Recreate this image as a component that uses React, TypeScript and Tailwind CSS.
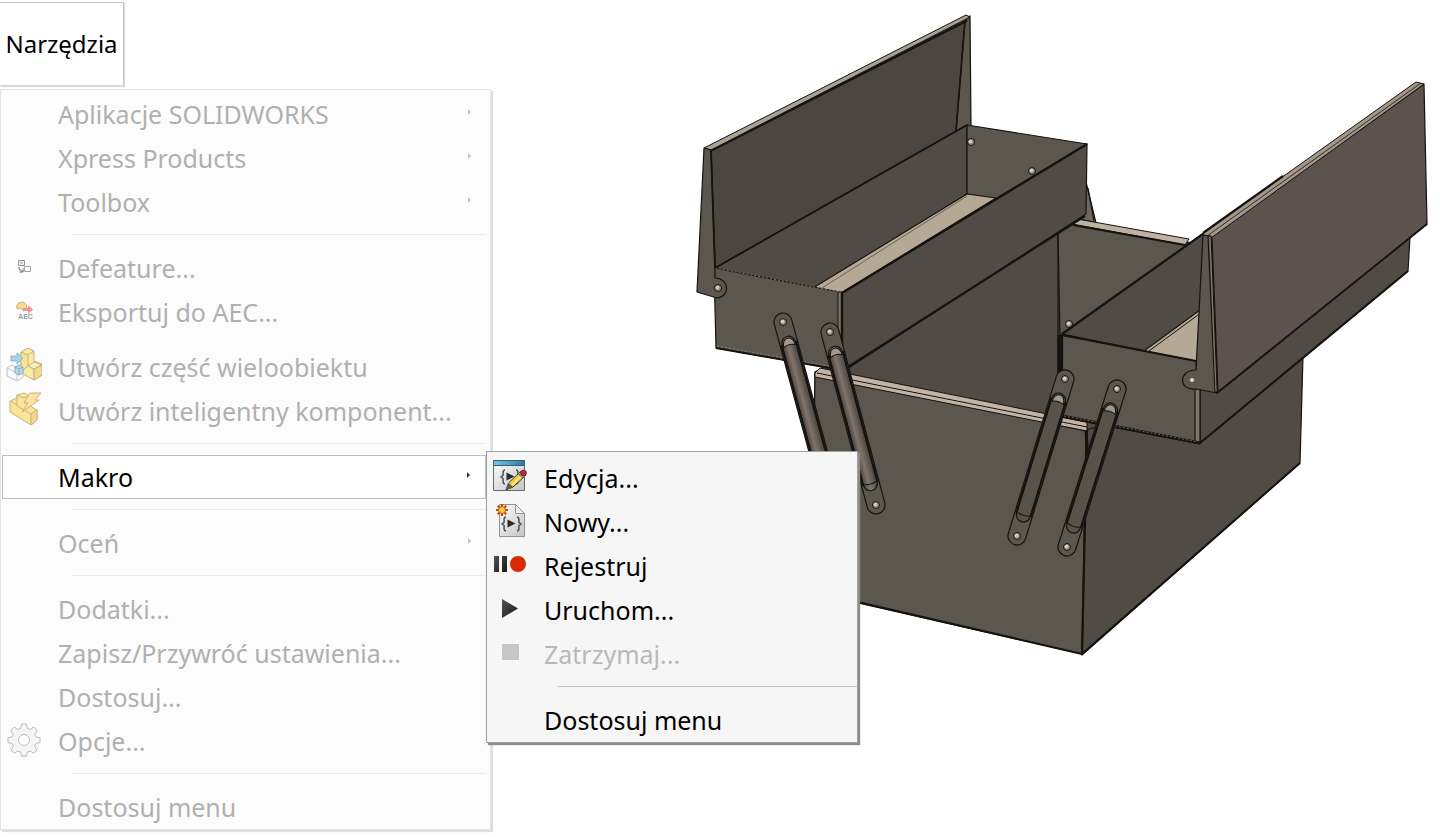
import React, { useState } from "react";
import clsx from "clsx";

const DefeatureIcon = () => (
  <svg viewBox="0 0 36 36" className="h-9 w-9" fill="none" stroke="#8f8f8f">
    <path d="M12.500 12.500h6v5h-6z" />
    <path d="M14 13.500l3 3m0-3l-3 3" strokeWidth="0.800" />
    <path d="M18.500 18.500h6v5h-6z" stroke="#a8a8a8" />
    <path d="M13 19v2l4 3M17 20.500V24h-3.500" stroke="#6d6d6d" />
  </svg>
);

const AecIcon = () => (
  <svg viewBox="0 0 36 36" className="h-9 w-9">
    <path
      d="M10.500 15l2-4 5-1 3 3v4l-3 2-3-3-3 1z"
      fill="#f8dc8c"
      stroke="#c9ab80"
    />
    <path d="M17 16h5v-3l5 4.500-5 4.500v-3h-5z" fill="#ee9499" />
    <text
      x="19.500"
      y="27"
      textAnchor="middle"
      fontSize="7"
      fontWeight="bold"
      fill="#9a9a9a"
      fontFamily="Liberation Sans, sans-serif"
    >
      AEC
    </text>
  </svg>
);

const PartIcon = () => (
  <svg viewBox="0 0 36 36" className="h-9 w-9" strokeLinejoin="round">
    <g stroke="#c3b183">
      <path d="M15 5l7-4 6 3v10l8 3v11l-8 5-13-7z" fill="#faeba4" />
      <path d="M15 5l7 3v11l-7 6z" fill="#f8e491" />
      <path d="M22 8l6-4M22 19l6-4 8 3-8 4zM28 22v11" fill="#fbf0bd" />
      <path d="M28 22l8-4v10l-8 5z" fill="#f1dc8b" />
    </g>
    <path
      d="M1 21l5-3 3 2v5l4 2 4-2v5l-6 4-10-5z"
      fill="#fbfbfb"
      stroke="#b9bec6"
    />
    <path d="M1 21l10 5v8" fill="none" stroke="#c5c9d0" />
    <path d="M9 20l4-2 4 2v6l-4 2-4-2z" fill="#b4dcf0" stroke="#86b0c8" />
    <path d="M9 20l4 2 4-2M13 22v6" fill="none" stroke="#86b0c8" />
    <path d="M5 9h6V6l6 5-6 6v-3H5z" fill="#a9d4ea" stroke="#8bb4ca" />
  </svg>
);

const SmartPartIcon = () => (
  <svg viewBox="0 0 36 36" className="h-9 w-9" strokeLinejoin="round">
    <g stroke="#cbb383">
      <path
        d="M4 10l7-3V4l7-2 6 3v10l7 4v10l-6 5L4 21z"
        fill="#f9e697"
      />
      <path d="M4 10l7 4V4l6 3 7-2M11 14v1l14 8 6-4M25 23v11" fill="none" />
      <path d="M25 23l6-4v10l-6 5z" fill="#f2d98c" />
    </g>
    <path
      d="M24 2h11l-6 7h4L16 21l6-9h-4z"
      fill="#fce3a0"
      stroke="#dba987"
    />
  </svg>
);

const GearIcon = () => (
  <svg
    viewBox="0 0 36 36"
    className="h-9 w-9"
    fill="#f5f5f5"
    stroke="#bcbcbc"
    strokeLinejoin="round"
  >
    <path d="M15.500 3h5l.8 4.300 2.800 1.200L27.700 6l3.500 3.500-2.500 3.700 1.200 2.700 4.100.8v5l-4.100.8-1.200 2.700 2.500 3.700-3.500 3.400-3.600-2.400-2.800 1.200-.8 4h-5l-.8-4-2.800-1.200-3.600 2.400-3.500-3.400 2.500-3.700-1.200-2.700-4.100-.8v-5l4.100-.8 1.200-2.700-2.500-3.700L8.300 6l3.600 2.500 2.800-1.200z" />
    <circle cx="18" cy="19" r="5.500" fill="#fcfcfc" />
  </svg>
);

const Braces = () => (
  <g fill="none" stroke="#4a4a4a" strokeWidth="1.500">
    <path d="M13 12c-3 0-1.500 4-2 5.500L9 19l2 1.500c.5 1.500-1 5.500 2 5.500" />
    <path d="M24 12c3 0 1.500 4 2 5.500l2 1.500-2 1.500c-.5 1.500 1 5.500-2 5.500" />
    <path d="M14.500 14.500v8l8-4z" fill="#2b2b2b" stroke="none" />
  </g>
);

const EditIcon = () => (
  <svg viewBox="0 0 36 36" className="h-9 w-9">
    <defs>
      <linearGradient id="sheet" x1="0" y1="0" x2="1" y2="1">
        <stop offset="0" stopColor="#fdfdfd" />
        <stop offset="1" stopColor="#c4c4c4" />
      </linearGradient>
      <linearGradient id="titlebar">
        <stop offset="0" stopColor="#7cc3dd" />
        <stop offset="1" stopColor="#2f7ba0" />
      </linearGradient>
    </defs>
    <path d="M1.500 2.500h31v30h-31z" fill="url(#sheet)" stroke="#676b6e" />
    <path d="M1.500 2.500h31v5h-31z" fill="url(#titlebar)" stroke="#2e617a" />
    <Braces />
    <path d="M14 32l2.500-7L28 14l5 4-12 11z" fill="#f2cb3c" stroke="#4c4223" />
    <path d="M20 27l10-10" stroke="#fff0a0" strokeWidth="1.500" />
    <path d="M14 32l2.500-7 4.500 4z" fill="#5a5a50" />
    <path
      d="M26 16l3-3 5 4-3 3z"
      fill="#a2a2a2"
      stroke="#555"
      strokeWidth="0.700"
    />
    <circle cx="31.500" cy="15" r="2.800" fill="#b52f3c" stroke="#711e27" />
  </svg>
);

const NewIcon = () => (
  <svg viewBox="0 0 36 36" className="h-9 w-9">
    <path d="M7.500 2.500h16l9 9v23h-25z" fill="url(#sheet)" stroke="#929292" />
    <path d="M23.500 2.500v9h9z" fill="#f4f4f4" stroke="#929292" />
    <g transform="translate(1 3)">
      <Braces />
    </g>
    <path
      d="M10 2v12M4 8h12M5.800 3.800l8.400 8.400M14.200 3.800l-8.400 8.400"
      stroke="#b94c16"
      strokeWidth="2.200"
    />
    <circle cx="10" cy="8" r="3.500" fill="#ffc746" stroke="#cf5b18" />
  </svg>
);

const RecordIcon = () => (
  <svg viewBox="0 0 36 36" className="h-9 w-9">
    <defs>
      <linearGradient id="dark" x1="0" y1="0" x2="1" y2="1">
        <stop offset="0" stopColor="#555" />
        <stop offset="1" stopColor="#151515" />
      </linearGradient>
    </defs>
    <path d="M2 10h5v16H2zM10 10h5v16h-5z" fill="url(#dark)" />
    <circle cx="26" cy="18" r="8" fill="#d92a04" />
  </svg>
);

const RunIcon = () => (
  <svg viewBox="0 0 36 36" className="h-9 w-9">
    <path d="M10 9l16 9.500L10 28z" fill="url(#dark)" />
  </svg>
);

const StopIcon = () => (
  <svg viewBox="0 0 36 36" className="h-9 w-9">
    <path d="M10 10h17v16H10z" fill="#c6c6c6" />
  </svg>
);

const SubmenuArrow = () => (
  <svg
    viewBox="0 0 6 8"
    className="mb-1 h-2 w-1.5 opacity-80"
    fill="currentColor"
  >
    <path d="M2 1l3 3-3 3z" />
  </svg>
);

interface MenuItemProps {
  label: string;
  icon?: React.ReactNode;
  hasSubmenu?: boolean;
  active?: boolean;
  disabled?: boolean;
  onClick?: () => void;
}

function MenuItem({
  label,
  icon,
  hasSubmenu,
  active,
  disabled,
  onClick,
}: MenuItemProps) {
  return (
    <button
      type="button"
      role="menuitem"
      disabled={disabled}
      aria-haspopup={hasSubmenu ? "menu" : undefined}
      onClick={onClick}
      className={clsx(
        "flex h-11 w-full items-center text-left disabled:text-[#b9b9b9]",
        active ? "border border-[#bdbdbd] bg-white pr-3.5 text-black" : "pr-3.5"
      )}
    >
      <span
        className={clsx(
          "flex shrink-0 justify-center pb-1",
          active ? "w-[55px]" : "w-14 pr-3"
        )}
      >
        {icon}
      </span>
      <span className="flex-1 whitespace-nowrap">{label}</span>
      {hasSubmenu && <SubmenuArrow />}
    </button>
  );
}

function Separator() {
  return (
    <li role="separator" className="h-[22px] pl-[70px] pt-2.5">
      <div className="border-t border-current opacity-20" />
    </li>
  );
}

function MacroMenu() {
  return (
    <ul
      role="menu"
      aria-label="Makro"
      className="absolute -top-1 left-full z-10 w-[372px] border border-[#a0a0a0] bg-[#f6f6f6] pl-px pt-1 text-black shadow-[2px_2px_1px_#8c8c8c]"
    >
      <li>
        <MenuItem label="Edycja..." icon={<EditIcon />} />
      </li>
      <li>
        <MenuItem label="Nowy..." icon={<NewIcon />} />
      </li>
      <li>
        <MenuItem label="Rejestruj" icon={<RecordIcon />} />
      </li>
      <li>
        <MenuItem label="Uruchom..." icon={<RunIcon />} />
      </li>
      <li>
        <MenuItem label="Zatrzymaj..." icon={<StopIcon />} disabled />
      </li>
      <Separator />
      <li>
        <MenuItem label="Dostosuj menu" />
      </li>
    </ul>
  );
}

function ToolsMenu() {
  const [macroOpen, setMacroOpen] = useState(true);

  return (
    <ul
      role="menu"
      aria-label="Narzędzia"
      className="border border-[#e3e3e3] bg-[#fcfcfc] pl-px pr-1 pt-0.5 text-[#b0b0b0] shadow-[2px_2px_1px_#dedede]"
    >
      <li>
        <MenuItem label="Aplikacje SOLIDWORKS" hasSubmenu />
      </li>
      <li>
        <MenuItem label="Xpress Products" hasSubmenu />
      </li>
      <li>
        <MenuItem label="Toolbox" hasSubmenu />
      </li>
      <Separator />
      <li>
        <MenuItem label="Defeature..." icon={<DefeatureIcon />} />
      </li>
      <li className="mb-[11px]">
        <MenuItem label="Eksportuj do AEC..." icon={<AecIcon />} />
      </li>
      <li>
        <MenuItem label="Utwórz część wieloobiektu" icon={<PartIcon />} />
      </li>
      <li>
        <MenuItem
          label="Utwórz inteligentny komponent..."
          icon={<SmartPartIcon />}
        />
      </li>
      <Separator />
      <li className="relative">
        <MenuItem
          label="Makro"
          hasSubmenu
          active
          onClick={() => setMacroOpen(!macroOpen)}
        />
        {macroOpen && <MacroMenu />}
      </li>
      <Separator />
      <li>
        <MenuItem label="Oceń" hasSubmenu />
      </li>
      <Separator />
      <li>
        <MenuItem label="Dodatki..." />
      </li>
      <li>
        <MenuItem label="Zapisz/Przywróć ustawienia..." />
      </li>
      <li>
        <MenuItem label="Dostosuj..." />
      </li>
      <li>
        <MenuItem label="Opcje..." icon={<GearIcon />} />
      </li>
      <Separator />
      <li>
        <MenuItem label="Dostosuj menu" />
      </li>
    </ul>
  );
}

interface Point {
  x: number;
  y: number;
}

const Rivet = ({ x, y }: Point) => (
  <g>
    <circle cx={x} cy={y} r="3.500" fill="#978b80" strokeWidth="1" />
    <circle cx={x - 0.5} cy={y - 0.5} r="1.800" fill="#dccfc2" stroke="none" />
  </g>
);

// Hinged arm: flat plate with a raised tube between its two rivets
function Arm({ from, to, tube }: { from: Point; to: Point; tube: string }) {
  const length = Math.hypot(to.x - from.x, to.y - from.y);
  const angle =
    (Math.atan2(to.y - from.y, to.x - from.x) * 180) / Math.PI - 90;

  return (
    <g>
      <g transform={`translate(${from.x} ${from.y}) rotate(${angle})`}>
        <rect
          x="-9"
          y="-9"
          width="18"
          height={length + 18}
          rx="9"
          fill="#5b564e"
          strokeWidth="1.200"
        />
        <rect
          x="-7"
          y="15"
          width="14"
          height={length - 30}
          rx="7"
          fill={tube}
          strokeWidth="1.200"
        />
        <path
          d="M-6 25c1-11 11-11 12 0q-6-3-12 0z"
          fill="#a3988b"
          strokeWidth="1"
        />
        <path
          d={`M-7 ${length - 23}q7 3 14 0`}
          fill="none"
          strokeWidth="1"
        />
        <path
          d={`M-7.500 22V${length - 22}M7.500 22V${length - 22}`}
          strokeWidth="2"
        />
      </g>
      <Rivet x={from.x} y={from.y} />
      <Rivet x={to.x} y={to.y} />
    </g>
  );
}

function ToolboxDrawing() {
  return (
    <svg
      viewBox="491 0 949 837"
      role="img"
      aria-label="Toolbox"
      className="h-auto w-full"
      stroke="#15130f"
      strokeWidth="1.200"
      strokeLinejoin="round"
    >
      <defs>
        <linearGradient id="tubeLight" x1="0" x2="1">
          <stop offset="0" stopColor="#4b443d" />
          <stop offset="0.400" stopColor="#80756b" />
          <stop offset="1" stopColor="#4b443d" />
        </linearGradient>
      </defs>

      {/* rear bracket and inside of the main box */}
      <path d="M1086 182l10 41-16-4z" fill="#6e665c" />
      <path d="M1088 188l6 33" />
      <path d="M815 372l260-150 118 21v200H815z" fill="#504b44" />
      <path d="M1058 233l17-11 118 22-133 92z" fill="#5b564e" />
      <path d="M1072 224l5-5 112 20-4 6z" fill="#c0b2a3" strokeWidth="1" />
      <path d="M1073 225l112 20" strokeWidth="1.800" />
      <path d="M1058 230v170" />
      <path d="M1059 335v45" strokeWidth="3" />
      <Rivet x={1069} y={324} />

      {/* main box */}
      <path d="M1087 430l216-74-3 107-218 192z" fill="#504b44" />
      <path d="M815 373l271 58-4 223-224-51-46-11z" fill="#5b564e" />
      <path
        d="M815 373l5-5 267 54v9l-272-54z"
        fill="#c2b3a4"
        strokeWidth="1"
      />
      <path d="M817 373l270 54" strokeWidth="1" />
      <path d="M1087 430l-5 224" strokeWidth="2.200" />
      <path d="M858 602l224 52 218-191" fill="none" strokeWidth="2" />
      <path d="M1086 431l2 30" strokeWidth="3" />

      {/* left lid */}
      <path d="M711 150L966 20l-10 112-241 137z" fill="#4b463f" />
      <path d="M965 21l5-5 1 110-15 6z" fill="#5b564e" />
      <path
        d="M704 148L966 15l4 2-259 133z"
        fill="#aaa094"
        strokeWidth="1"
      />
      <path d="M711 151L967 21M965 21l-9 110" strokeWidth="1.600" />

      {/* left tray */}
      <path d="M715 268l252-143v69l-152 95z" fill="#504b44" />
      <path d="M967 125l120 19-92 55-28-5z" fill="#5b564e" />
      <path d="M967 194l29 4-155 95-28-5z" fill="#b5a894" />
      <path d="M822 288l145-92" stroke="#6b6254" strokeWidth="1" />
      <path d="M715 268l252-143" strokeWidth="1.800" />
      <Rivet x={971} y={142} />
      <Rivet x={1032} y={171} />
      <path d="M842 293l245-149-1 70-236 153-8 3z" fill="#504b44" />
      <path
        d="M842 293l245-149M848 367l237-151"
        fill="none"
        strokeWidth="2.200"
      />
      <path d="M714 268l126 24 1 78-125-22z" fill="#5b564e" />
      <path d="M838 292h4v76h-4z" fill="#7c7469" strokeWidth="1" />
      <path d="M842 293v76" strokeWidth="2.400" />
      <path
        d="M715 268l125 24M717 346l122 22"
        stroke="#a49a8c"
        strokeWidth="0.700"
        strokeDasharray="2 2"
      />
      <path d="M716 348l125 22" strokeWidth="2" />
      <path
        d="M704 148l7 2 4 118v10c14 0 16 18 2 20l-20-6z"
        fill="#5b564e"
      />
      <path d="M711 150l4 118" strokeWidth="1.800" />
      <Rivet x={718} y={288} />

      {/* right tray */}
      <path d="M1062 334l221-157 14 6-98 128-4 50z" fill="#504b44" />
      <path d="M1062 334l221-157" strokeWidth="2.200" />
      <path d="M1144 351l56-41-3 52z" fill="#b5a894" />
      <path d="M1149 351l49-36" strokeWidth="1" />
      <path d="M1200 388l210-151-2 34-208 172z" fill="#504b44" />
      <path d="M1200 443l208-172" strokeWidth="2" />
      <path d="M1061 335l135 26 4 83-140-27z" fill="#5b564e" />
      <path d="M1195 388h5v55h-5z" fill="#7c7469" />
      <path d="M1062 335v54" strokeWidth="2.200" />
      <path d="M1062 335l134 26" strokeWidth="1.800" />
      <path d="M1062 416l138 27" strokeWidth="3" />
      <path
        d="M1064 416l134 26"
        stroke="#81786c"
        strokeWidth="0.800"
        strokeDasharray="2 2"
      />

      {/* right lid */}
      <path d="M1211 237L1424 84l3 140-210 169z" fill="#5c534e" />
      <path
        d="M1202 234L1416 82l8 2-213 154z"
        fill="#a29788"
        strokeWidth="1"
      />
      <path d="M1207 236L1421 83" strokeWidth="0.800" />
      <path d="M1203 233l80-57" strokeWidth="2.200" />
      <path
        d="M1203 235l8 1 6 157-21-4c-18 2-18-19 0-19z"
        fill="#5b564e"
      />
      <path d="M1208 236l7 156" />
      <path d="M1210 237l6 154" stroke="#81786d" />
      <path d="M1212 238l6 154" />
      <circle
        cx="1192"
        cy="380"
        r="2.500"
        fill="#e5d4c1"
        strokeWidth="0.500"
      />
      <path d="M1217 393l210-169" strokeWidth="1.800" />

      <Arm
        from={{ x: 783, y: 322 }}
        to={{ x: 830, y: 495 }}
        tube="url(#tubeLight)"
      />
      <Arm
        from={{ x: 830, y: 332 }}
        to={{ x: 876, y: 505 }}
        tube="url(#tubeLight)"
      />
      <Arm from={{ x: 1065, y: 379 }} to={{ x: 1017, y: 536 }} tube="#585249" />
      <Arm from={{ x: 1117, y: 389 }} to={{ x: 1067, y: 547 }} tube="#585249" />
    </svg>
  );
}

export default function App() {
  return (
    <main className="flex min-h-screen items-start bg-white font-['Noto_Sans','Open_Sans',sans-serif] text-[25px] leading-8">
      <nav className="w-[491px] shrink-0 pt-0.5">
        <button
          type="button"
          aria-haspopup="menu"
          className="mb-[3px] flex h-[84px] w-[124px] items-center justify-center border-y border-r border-[#c4c4c4] border-b-[#d5d5d5] text-2xl text-black shadow-[1px_1px_1px_#dcdcdc]"
        >
          Narzędzia
        </button>
        <ToolsMenu />
      </nav>
      <figure className="min-w-0 flex-1">
        <ToolboxDrawing />
      </figure>
    </main>
  );
}
